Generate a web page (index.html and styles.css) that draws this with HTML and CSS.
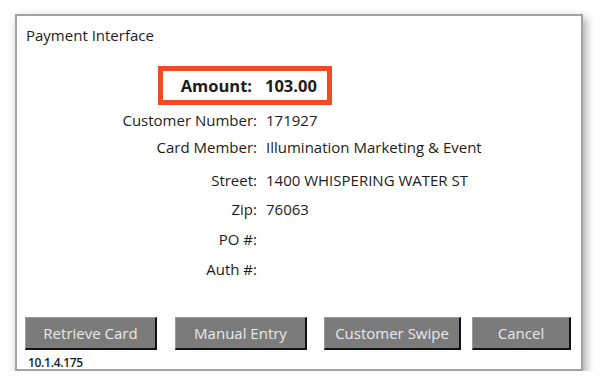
FILE: index.html
```html
<!DOCTYPE html>
<html>
<head>
    <title>Payment Interface</title>
    <link rel="stylesheet" href="styles.css">
</head>
<body>
    <div class="window">
        <div class="title">Payment Interface</div>

        <div class="amount-box">
            <span class="amount-label">Amount:</span>
            <span class="amount-value">103.00</span>
        </div>

        <div class="fields">
            <div class="label">Customer Number:</div><div class="value">171927</div>
            <div class="label">Card Member:</div><div class="value">Illumination Marketing &amp; Event</div>
            <div class="label">Street:</div><div class="value">1400 WHISPERING WATER ST</div>
            <div class="label">Zip:</div><div class="value">76063</div>
            <div class="label">PO #:</div><div class="value"></div>
            <div class="label">Auth #:</div><div class="value"></div>
        </div>

        <div class="buttons">
            <button class="btn btn-retrieve">Retrieve Card</button>
            <button class="btn btn-manual">Manual Entry</button>
            <button class="btn btn-swipe">Customer Swipe</button>
            <button class="btn btn-cancel">Cancel</button>
        </div>
        <div class="footer">10.1.4.175</div>
    </div>
</body>
</html>
```

FILE: styles.css
```css
body {
    margin: 0;
    background-color: #ffffff;
    font-family: 'Open Sans', sans-serif;
    color: #1c1c1c;
}

.window {
    margin: 14px 0 0 15px;
    width: 564px;
    height: 353px;
    border: 2px solid #a3a3a3;
    background-color: #ffffff;
    box-shadow: 3px 4px 9px rgba(0, 0, 0, 0.35);
    display: flex;
    flex-direction: column;
}

.title {
    font-size: 15px;
    margin: 9px 0 0 9px;
    line-height: 20px;
}

/* highlighted amount */
.amount-box {
    margin: 21px 0 0 141px;
    width: 164px;
    height: 29px;
    border: 5px solid #f24a23;
    display: flex;
    align-items: center;
    font-weight: 700;
    font-size: 16.5px;
}

.amount-label {
    width: 89px;
    text-align: right;
    margin-right: 13px;
}

.fields {
    display: grid;
    grid-template-columns: 240px 1fr;
    grid-auto-rows: 30px;
    column-gap: 9px;
    align-items: center;
    margin-top: 0;
    font-size: 15px;
}

.fields .label:nth-child(3),
.fields .value:nth-child(4) {
    margin-top: -6px;
}

.fields .label:nth-child(n+7),
.fields .value:nth-child(n+8) {
    margin-top: -2px;
}

.label {
    text-align: right;
}

.buttons {
    margin-top: auto;
    display: flex;
    padding-left: 8px;
}

.btn {
    height: 33px;
    background-color: #7b7b7b;
    color: #e9e9e9;
    font-family: 'Open Sans', sans-serif;
    font-size: 15px;
    border-top: 1px solid #9a9a9a;
    border-left: 1px solid #9a9a9a;
    border-right: 2px solid #111111;
    border-bottom: 2px solid #111111;
    padding: 0;
}

.btn-retrieve { width: 132px; }
.btn-manual { width: 132px; margin-left: 18px; }
.btn-swipe { width: 137px; margin-left: 17px; }
.btn-cancel { width: 99px; margin-left: 11px; }

.footer {
    font-size: 12px;
    font-weight: 600;
    letter-spacing: -0.3px;
    margin: 7px 0 1px 11px;
    line-height: 11px;
}
```
